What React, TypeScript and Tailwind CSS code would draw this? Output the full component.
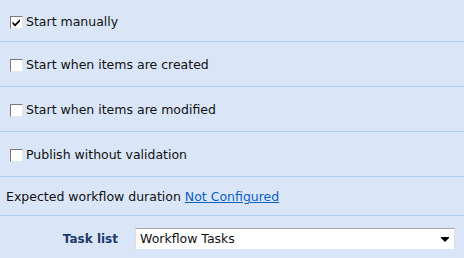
import React from "react";

function Box({ checked }: { checked?: boolean }) {
  return (
    <span className="inline-flex h-[13px] w-[13px] shrink-0 items-center justify-center border border-t-[#7a7a7a] border-l-[#7a7a7a] border-r-[#e8e8e8] border-b-[#e8e8e8] bg-white">
      {checked && (
        <svg width="9" height="9" viewBox="0 0 9 9">
          <path d="M0.5 3.5 L3 6 L8 1 L8 3.5 L3 8.5 L0.5 6 Z" fill="#000" />
        </svg>
      )}
    </span>
  );
}

function Row({ label, checked, h }: { label: string; checked?: boolean; h: string }) {
  return (
    <div className={`flex items-center gap-[3px] border-b border-[#b0c9f0] pl-[10px] pt-[3px] ${h}`}>
      <Box checked={checked} />
      <span>{label}</span>
    </div>
  );
}

export default function App() {
  return (
    <div
      className="h-[258px] w-[464px] overflow-hidden bg-[#dae6f8] text-[12.5px] text-[#101010]"
      style={{ fontFamily: "'DejaVu Sans', Verdana, sans-serif" }}
    >
      <Row label="Start manually" checked h="h-[42px]" />
      <Row label="Start when items are created" h="h-[45px]" />
      <Row label="Start when items are modified" h="h-[45px]" />
      <Row label="Publish without validation" h="h-[45px]" />
      <div className="flex h-[39px] items-center border-b border-[#b0c9f0] pl-[6px] pt-[3px]">
        <span>Expected workflow duration&nbsp;</span>
        <a className="text-[#0a5fc9] underline" href="#">Not Configured</a>
      </div>
      <div className="flex items-center pt-[12px]">
        <div className="w-[119px] pr-[1px] text-right text-[12px] font-bold text-[#1c3a6a]">Task list</div>
        <div className="ml-[16px] flex h-[21px] w-[320px] items-center justify-between border-t border-l border-t-[#a8a8a8] border-l-[#e0e0e0] border-r border-r-[#e0e0e0] bg-white pl-[4px] pr-[5px]">
          <span>Workflow Tasks</span>
          <svg width="8" height="5" viewBox="0 0 8 5">
            <path d="M0 0 H8 V1 L4 5 L0 1 Z" fill="#000" />
          </svg>
        </div>
      </div>
    </div>
  );
}
